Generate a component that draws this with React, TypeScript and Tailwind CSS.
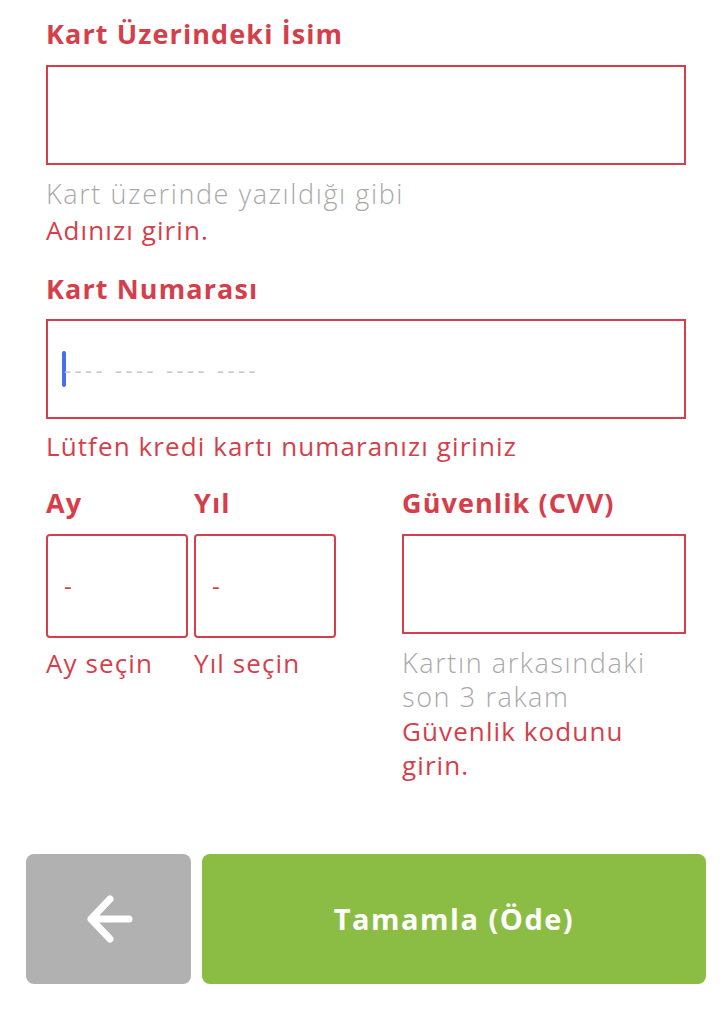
import React from "react";

const RED = "text-[#d43f4b]";
const ERR = "text-[26px] leading-[34px] tracking-[1.1px] text-[#d43f4b]";
const HELP = "text-[27px] leading-[34px] tracking-[1.6px] font-light text-[#a9a9a9]";

function Label({ children }: { children: React.ReactNode }) {
  return (
    <div className={`font-bold text-[27px] leading-[32px] tracking-[1.1px] ${RED} whitespace-nowrap`}>
      {children}
    </div>
  );
}

export default function App() {
  return (
    <div
      className="w-[728px] h-[1016px] bg-white overflow-hidden"
      style={{ fontFamily: '"Open Sans", "Noto Sans", sans-serif' }}
    >
      <div className="pl-[46px] pr-[42px] pt-[18px] flex flex-col">
        <Label>Kart Üzerindeki İsim</Label>
        <div className="mt-[15px] h-[100px] border-2 border-[#d43f4b] bg-white" />
        <div className={`mt-[12px] ${HELP} whitespace-nowrap`}>Kart üzerinde yazıldığı gibi</div>
        <div className={`mt-[2px] ${ERR}`}>Adınızı girin.</div>

        <div className="mt-[26px]">
          <Label>Kart Numarası</Label>
        </div>
        <div className="mt-[14px] h-[100px] border-2 border-[#d43f4b] bg-white flex items-center pl-[14px]">
          <span className="w-[4px] h-[36px] rounded-full bg-[#4a6cf0]" />
          <span className="text-[22px] tracking-[3.4px] text-[#c9c9c9] -ml-[2px] whitespace-pre">
            ---- ---- ---- ----
          </span>
        </div>
        <div className={`mt-[10px] ${ERR} whitespace-nowrap`}>Lütfen kredi kartı numaranızı giriniz</div>

        <div className="mt-[24px] flex">
          <div className="w-[142px] flex flex-col">
            <Label>Ay</Label>
            <div className="mt-[15px] h-[104px] border-2 border-[#d43f4b] rounded-[4px] flex items-center pl-[16px]">
              <span className={`text-[24px] ${RED}`}>-</span>
            </div>
            <div className={`mt-[8px] ${ERR} whitespace-nowrap`}>Ay seçin</div>
          </div>
          <div className="w-[142px] ml-[6px] flex flex-col">
            <Label>Yıl</Label>
            <div className="mt-[15px] h-[104px] border-2 border-[#d43f4b] rounded-[4px] flex items-center pl-[16px]">
              <span className={`text-[24px] ${RED}`}>-</span>
            </div>
            <div className={`mt-[8px] ${ERR} whitespace-nowrap`}>Yıl seçin</div>
          </div>
          <div className="w-[284px] ml-[66px] flex flex-col">
            <Label>Güvenlik (CVV)</Label>
            <div className="mt-[15px] h-[100px] border-2 border-[#d43f4b]" />
            <div className={`mt-[12px] ${HELP} whitespace-nowrap`}>
              Kartın arkasındaki
              <br />
              son 3 rakam
            </div>
            <div className={`${ERR} whitespace-nowrap`}>
              Güvenlik kodunu
              <br />
              girin.
            </div>
          </div>
        </div>
      </div>

      <div className="absolute left-0 top-[854px] w-[728px] pl-[26px] flex gap-[11px]">
        <button className="w-[165px] h-[130px] rounded-[8px] bg-[#b1b1b1] flex items-center justify-center">
          <svg width="48" height="48" viewBox="0 0 48 48" fill="none">
            <path
              d="M44 24 H7 M25 4 L6 24 L25 44"
              stroke="white"
              strokeWidth="7"
              strokeLinecap="round"
              strokeLinejoin="round"
            />
          </svg>
        </button>
        <button className="w-[504px] h-[130px] rounded-[8px] bg-[#8bbd45] flex items-center justify-center">
          <span className="text-white font-bold text-[29px] tracking-[1.5px]">Tamamla (Öde)</span>
        </button>
      </div>
    </div>
  );
}
